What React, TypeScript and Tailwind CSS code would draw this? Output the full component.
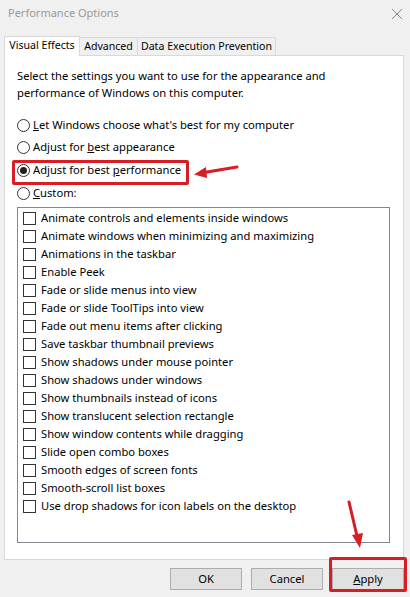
import React from 'react';

const effects = [
  'Animate controls and elements inside windows',
  'Animate windows when minimizing and maximizing',
  'Animations in the taskbar',
  'Enable Peek',
  'Fade or slide menus into view',
  'Fade or slide ToolTips into view',
  'Fade out menu items after clicking',
  'Save taskbar thumbnail previews',
  'Show shadows under mouse pointer',
  'Show shadows under windows',
  'Show thumbnails instead of icons',
  'Show translucent selection rectangle',
  'Show window contents while dragging',
  'Slide open combo boxes',
  'Smooth edges of screen fonts',
  'Smooth-scroll list boxes',
  'Use drop shadows for icon labels on the desktop',
];

function Radio({ checked, children }: { checked?: boolean; children: React.ReactNode }) {
  return (
    <div className="flex items-center h-[22.6px]">
      <span className="w-[13px] h-[13px] rounded-full border border-[#333] bg-white flex items-center justify-center shrink-0">
        {checked && <span className="w-[7px] h-[7px] rounded-full bg-[#222]" />}
      </span>
      <span className="ml-[3px]">{children}</span>
    </div>
  );
}

function Check({ label }: { label: string }) {
  return (
    <div className="flex items-center h-[18px]">
      <span className="w-[13px] h-[13px] border border-[#333] bg-white shrink-0" />
      <span className="ml-[5px]">{label}</span>
    </div>
  );
}

function Button({ children }: { children: React.ReactNode }) {
  return (
    <button className="w-[72px] h-[22px] bg-[#e1e1e1] border border-[#adadad] text-[11.2px] text-black leading-none">
      {children}
    </button>
  );
}

export default function App() {
  return (
    <div
      className="relative w-[410px] h-[597px] bg-[#f0f0f0] overflow-hidden text-[11.2px] text-black"
      style={{ fontFamily: '"Noto Sans", "Open Sans", sans-serif' }}
    >
      {/* Title bar */}
      <div className="h-[27px] flex items-center justify-between pl-[8px] pr-[8px]">
        <span className="text-[11px] text-[#999]">Performance Options</span>
        <svg width="10" height="10" viewBox="0 0 10 10">
          <path d="M0 0L10 10M10 0L0 10" stroke="#888" strokeWidth="1" />
        </svg>
      </div>

      {/* Tabs */}
      <div className="flex items-end pl-[4px] mt-[9px] h-[19px] whitespace-nowrap text-[10.6px]">
        <div className="w-[76px] shrink-0 h-[20px] -mb-px relative z-10 bg-white border border-b-0 border-[#d9d9d9] flex justify-center items-start pt-[1px]">
          Visual Effects
        </div>
        <div className="w-[58px] shrink-0 h-[18px] bg-[#f0f0f0] border border-l-0 border-b-0 border-[#d9d9d9] flex justify-center items-center pt-[1px]">
          Advanced
        </div>
        <div className="w-[138px] shrink-0 h-[18px] bg-[#f0f0f0] border border-l-0 border-b-0 border-[#d9d9d9] flex justify-center items-center pt-[1px]">
          Data Execution Prevention
        </div>
      </div>

      {/* Panel */}
      <div className="ml-[4px] w-[400px] h-[505px] bg-white border border-[#d9d9d9] pl-[12px] pr-[14px]">
        <p className="mt-[11px] leading-[17px]">
          Select the settings you want to use for the appearance and
          <br />
          performance of Windows on this computer.
        </p>
        <div className="mt-[13px]">
          <Radio>
            <u>L</u>et Windows choose what's best for my computer
          </Radio>
          <Radio>
            Adjust for <u>b</u>est appearance
          </Radio>
          <Radio checked>
            Adjust for best <u>p</u>erformance
          </Radio>
          <Radio>
            <u>C</u>ustom:
          </Radio>
        </div>
        <div className="mt-[3px] w-[373px] h-[336px] border border-[#828790] pl-[5px] pt-[1px]">
          {effects.map((e) => (
            <Check key={e} label={e} />
          ))}
        </div>
      </div>

      {/* Buttons */}
      <div className="flex justify-end gap-[9px] pr-[6px] mt-[8px]">
        <Button>OK</Button>
        <Button>Cancel</Button>
        <Button>
          <u>A</u>pply
        </Button>
      </div>

      {/* Annotations */}
      <div className="absolute left-[12px] top-[160px] w-[177px] h-[25px] border-[3px] border-[#d81e25] rounded-[2px]" />
      <div className="absolute left-[329px] top-[557px] w-[78px] h-[35px] border-[3px] border-[#d81e25] rounded-[2px]" />
      <svg className="absolute left-0 top-0 pointer-events-none" width="410" height="597">
        <line x1="237" y1="167" x2="204" y2="172.5" stroke="#d81e25" strokeWidth="3" strokeLinecap="round" />
        <polygon points="194,174.5 206,167 207,178" fill="#d81e25" />
        <line x1="349" y1="502" x2="357" y2="536" stroke="#d81e25" strokeWidth="3" strokeLinecap="round" />
        <polygon points="360,548 352,535 363,533" fill="#d81e25" />
      </svg>
    </div>
  );
}
